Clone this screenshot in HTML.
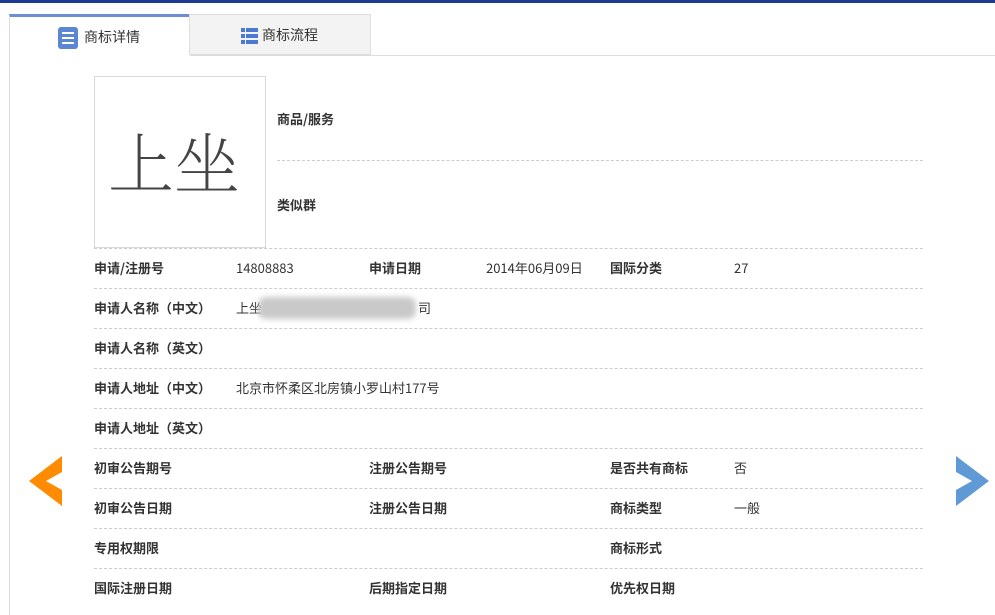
<!DOCTYPE html>
<html><head><meta charset="utf-8"><style>
*{margin:0;padding:0;box-sizing:border-box}
body{width:995px;height:602px;overflow:hidden;background:#fff;font-family:"Noto Sans CJK SC","Liberation Sans",sans-serif;font-size:13px;line-height:20px;color:#333;position:relative}
.abs{position:absolute}
.topbar{left:0;top:0;width:995px;height:3px;background:#1c3c94}
.tab1{left:9px;top:14px;width:181px;height:42px;border-top:3px solid #6a8fd6;border-left:1px solid #ddd;background:#fff}
.tab2{left:189px;top:14px;width:182px;height:41px;background:#f3f3f3;border:1px solid #ddd}
.cont{left:9px;top:55px;width:990px;height:560px;border-top:1px solid #ddd;border-left:1px solid #ddd}
.tabtxt{font-size:14px;color:#333}
.lbl{font-weight:bold;color:#333;font-size:13px}
.dash{height:0;border-top:1px dashed #ccc}
.imgbox{left:94px;top:76px;width:172px;height:172px;border:1px solid #d8d8d8;background:#fff}
</style></head><body>
<div class="abs topbar"></div>
<div class="abs cont"></div>
<div class="abs tab1"></div>
<div class="abs tab2"></div>
<svg class="abs" style="left:58px;top:27px" width="20" height="22" viewBox="0 0 20 22"><rect x="0" y="0" width="20" height="22" rx="3" fill="#5b86d4"/><rect x="4" y="5" width="12" height="2" fill="#fff"/><rect x="4" y="10" width="12" height="2" fill="#fff"/><rect x="4" y="15" width="12" height="2" fill="#fff"/></svg>
<div class="abs tabtxt" style="left:84px;top:27px">商标详情</div>
<svg class="abs" style="left:241px;top:28px" width="17" height="16" viewBox="0 0 17 16"><g fill="#4a7bd0"><rect x="0" y="0" width="4" height="4"/><rect x="5" y="0" width="12" height="4"/><rect x="0" y="6" width="4" height="4"/><rect x="5" y="6" width="12" height="4"/><rect x="0" y="12" width="4" height="4"/><rect x="5" y="12" width="12" height="4"/></g></svg>
<div class="abs tabtxt" style="left:262px;top:25px">商标流程</div>

<div class="abs imgbox"></div>
<div class="abs" style="left:108px;top:120px;font-family:'Noto Serif CJK SC',serif;font-weight:200;font-size:66px;line-height:80px;color:#444">上坐</div>
<div class="abs lbl" style="left:277px;top:109px">商品/服务</div>
<div class="abs dash" style="left:277px;top:160px;width:646px"></div>
<div class="abs lbl" style="left:277px;top:195px">类似群</div>

<div class="abs dash" style="left:94px;top:248px;width:829px"></div>
<div class="abs dash" style="left:94px;top:288px;width:829px"></div>
<div class="abs dash" style="left:94px;top:328px;width:829px"></div>
<div class="abs dash" style="left:94px;top:368px;width:829px"></div>
<div class="abs dash" style="left:94px;top:408px;width:829px"></div>
<div class="abs dash" style="left:94px;top:448px;width:829px"></div>
<div class="abs dash" style="left:94px;top:488px;width:829px"></div>
<div class="abs dash" style="left:94px;top:528px;width:829px"></div>
<div class="abs dash" style="left:94px;top:568px;width:829px"></div>

<div class="abs lbl" style="left:94px;top:258px">申请/注册号</div>
<div class="abs" style="left:236px;top:258px">14808883</div>
<div class="abs lbl" style="left:369px;top:258px">申请日期</div>
<div class="abs" style="left:486px;top:258px">2014年06月09日</div>
<div class="abs lbl" style="left:610px;top:258px">国际分类</div>
<div class="abs" style="left:734px;top:258px">27</div>

<div class="abs lbl" style="left:94px;top:298px">申请人名称（中文）</div>
<div class="abs" style="left:236px;top:298px">上坐</div>
<div class="abs" style="left:258px;top:297px;width:158px;height:22px;background:#c9c9c9;filter:blur(3px);border-radius:8px"></div>
<div class="abs" style="left:418px;top:298px">司</div>

<div class="abs lbl" style="left:94px;top:338px">申请人名称（英文）</div>
<div class="abs lbl" style="left:94px;top:378px">申请人地址（中文）</div>
<div class="abs" style="left:236px;top:378px">北京市怀柔区北房镇小罗山村177号</div>
<div class="abs lbl" style="left:94px;top:418px">申请人地址（英文）</div>

<div class="abs lbl" style="left:94px;top:458px">初审公告期号</div>
<div class="abs lbl" style="left:369px;top:458px">注册公告期号</div>
<div class="abs lbl" style="left:610px;top:458px">是否共有商标</div>
<div class="abs" style="left:734px;top:458px">否</div>

<div class="abs lbl" style="left:94px;top:498px">初审公告日期</div>
<div class="abs lbl" style="left:369px;top:498px">注册公告日期</div>
<div class="abs lbl" style="left:610px;top:498px">商标类型</div>
<div class="abs" style="left:734px;top:498px">一般</div>

<div class="abs lbl" style="left:94px;top:538px">专用权期限</div>
<div class="abs lbl" style="left:610px;top:538px">商标形式</div>

<div class="abs lbl" style="left:94px;top:578px">国际注册日期</div>
<div class="abs lbl" style="left:369px;top:578px">后期指定日期</div>
<div class="abs lbl" style="left:610px;top:578px">优先权日期</div>

<svg class="abs" style="left:29px;top:456px" width="34" height="50" viewBox="0 0 34 50"><polygon points="33,0 33,16 17,25 33,34 33,50 0,25" fill="#ff8c00"/></svg>
<svg class="abs" style="left:956px;top:456px" width="34" height="50" viewBox="0 0 34 50"><polygon points="0,0 0,16 16,25 0,34 0,50 33,25" fill="#5f9ad6"/></svg>
</body></html>
